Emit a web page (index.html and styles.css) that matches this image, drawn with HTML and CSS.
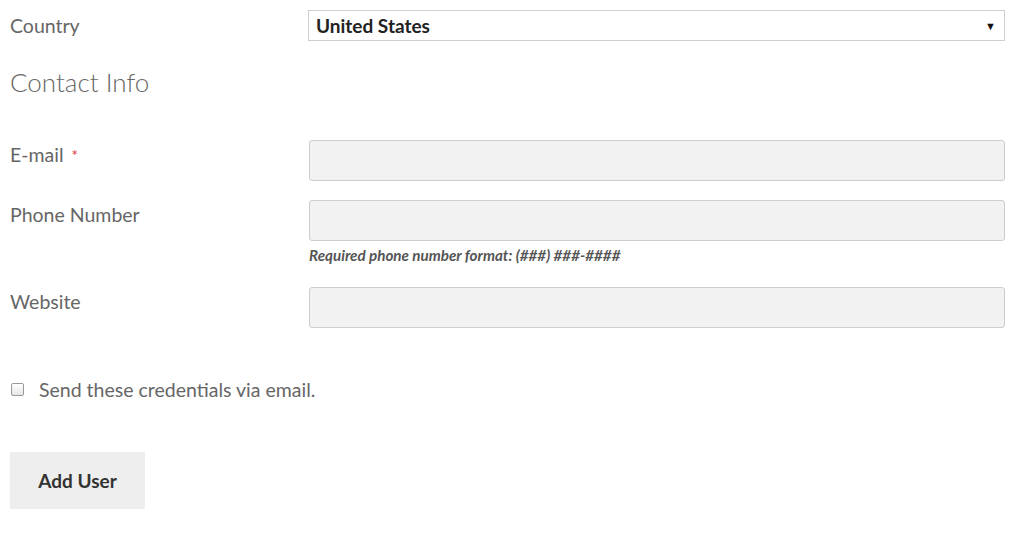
FILE: index.html
```html
<!DOCTYPE html>
<html>
<head>
<meta charset="utf-8">
<link rel="stylesheet" href="styles.css">
</head>
<body>
<form class="form">
  <div class="row row-country">
    <label class="label">Country</label>
    <div class="field">
      <div class="select">
        <span class="select-value">United States</span>
        <span class="select-arrow">▼</span>
      </div>
    </div>
  </div>

  <h2 class="section-title">Contact Info</h2>

  <div class="row row-email">
    <label class="label">E-mail <span class="req">*</span></label>
    <div class="field"><div class="input"></div></div>
  </div>

  <div class="row row-phone">
    <label class="label">Phone Number</label>
    <div class="field">
      <div class="input"></div>
      <div class="help">Required phone number format: (###) ###-####</div>
    </div>
  </div>

  <div class="row row-website">
    <label class="label">Website</label>
    <div class="field"><div class="input"></div></div>
  </div>

  <div class="check-row">
    <span class="checkbox"></span>
    <span class="check-label">Send these credentials via email.</span>
  </div>

  <div class="actions">
    <button type="button" class="btn">Add User</button>
  </div>
</form>
</body>
</html>
```

FILE: styles.css
```css
html, body {
  margin: 0;
  padding: 0;
  background: #fff;
}
body {
  font-family: "Lato", "Open Sans", "Liberation Sans", sans-serif;
  color: #666;
}
.form {
  padding: 10px 19px 0 10px;
}
.row {
  display: flex;
  align-items: flex-start;
}
.label {
  width: 298px;
  flex: none;
  font-size: 19.5px;
  color: #666;
  line-height: 22px;
}
.field {
  flex: 1;
}
.row-country .label {
  padding-top: 5px;
}
.select {
  height: 29px;
  border: 1px solid #cfcfcf;
  background: #fff;
  display: flex;
  align-items: center;
  justify-content: space-between;
  padding: 0 8px 0 7px;
}
.select-value {
  font-weight: 700;
  font-size: 19px;
  color: #222;
}
.select-arrow {
  font-size: 11px;
  color: #111;
}
.section-title {
  margin: 24px 0 0 0;
  font-size: 26px;
  font-weight: 300;
  color: #666;
  line-height: 34px;
}
.row-email {
  margin-top: 41px;
}
.row-email .label,
.row-phone .label,
.row-website .label {
  padding-top: 4px;
}
.input {
  height: 39px;
  background: #f2f2f2;
  border: 1px solid #cdcdcd;
  border-radius: 3px;
  margin-left: 1px;
}
.req {
  color: #d33;
  font-size: 15px;
  vertical-align: top;
  margin-left: 3px;
}
.row-phone {
  margin-top: 19px;
}
.help {
  margin: 5px 0 0 1px;
  font-size: 15.2px;
  font-style: italic;
  font-weight: 700;
  color: #555;
}
.row-website {
  margin-top: 23px;
}
.check-row {
  display: flex;
  align-items: center;
  margin-top: 50px;
  margin-left: 1px;
}
.checkbox {
  width: 11px;
  height: 11px;
  border: 1px solid #999;
  border-radius: 2px;
  background: linear-gradient(#fff, #e6e6e6);
  margin-right: 15px;
}
.check-label {
  font-size: 19.5px;
  color: #666;
}
.actions {
  margin-top: 51px;
}
.btn {
  width: 135px;
  height: 57px;
  background: #eee;
  border: none;
  border-radius: 0;
  font-family: inherit;
  font-size: 19px;
  font-weight: 700;
  color: #333;
  padding: 0;
}
```
